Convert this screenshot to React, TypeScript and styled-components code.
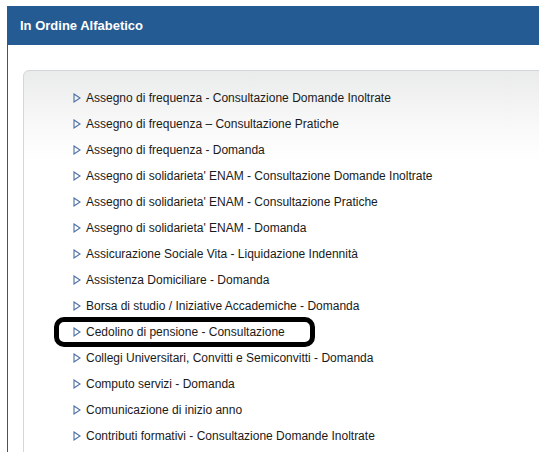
import React from "react";
import styled, { createGlobalStyle } from "styled-components";

const Global = createGlobalStyle`
  html, body { margin: 0; padding: 0; background: #ffffff; }
  body { font-family: "Liberation Sans", Arial, sans-serif; overflow: hidden; }
`;

const Page = styled.div`
  padding: 6px 0 0 7px;
  width: 539px;
  height: 452px;
  box-sizing: border-box;
  overflow: hidden;
`;

const Panel = styled.section`
  border-left: 1px solid #245b92;
  width: 560px;
  height: 460px;
`;

const Header = styled.header`
  background: #245b92;
  height: 39px;
  display: flex;
  align-items: center;
  padding-left: 12px;
  color: #ffffff;
  font-weight: bold;
  font-size: 13px;
`;

const Body = styled.div`
  padding: 25px 0 0 15px;
`;

const Box = styled.div`
  border: 1px solid #d3d7dd;
  border-radius: 6px 0 0 0;
  background: linear-gradient(to bottom, #eaebeb 0px, #fafafa 60px, #ffffff 90px);
  padding: 14px 0 20px 48px;
  height: 420px;
`;

const List = styled.ul`
  list-style: none;
  margin: 0;
  padding: 0;
  display: flex;
  flex-direction: column;
`;

const Item = styled.li`
  position: relative;
  height: 26px;
  display: flex;
  align-items: center;
  gap: 5px;
  font-size: 12px;
  color: #1a1a1a;
`;

const Marker = styled.svg`
  width: 8px;
  height: 10px;
  flex: none;
  margin-left: 1px;
`;

const Highlight = styled.span`
  position: absolute;
  left: -18px;
  top: -2px;
  width: 251px;
  height: 20px;
  border: 5px solid #000000;
  border-radius: 10px;
  pointer-events: none;
`;

const items = [
  "Assegno di frequenza - Consultazione Domande Inoltrate",
  "Assegno di frequenza – Consultazione Pratiche",
  "Assegno di frequenza - Domanda",
  "Assegno di solidarieta' ENAM - Consultazione Domande Inoltrate",
  "Assegno di solidarieta' ENAM - Consultazione Pratiche",
  "Assegno di solidarieta' ENAM - Domanda",
  "Assicurazione Sociale Vita - Liquidazione Indennità",
  "Assistenza Domiciliare - Domanda",
  "Borsa di studio / Iniziative Accademiche - Domanda",
  "Cedolino di pensione - Consultazione",
  "Collegi Universitari, Convitti e Semiconvitti - Domanda",
  "Computo servizi - Domanda",
  "Comunicazione di inizio anno",
  "Contributi formativi - Consultazione Domande Inoltrate",
];

export default function App() {
  return (
    <>
      <Global />
      <Page>
        <Panel>
          <Header>In Ordine Alfabetico</Header>
          <Body>
            <Box>
              <List>
                {items.map((t, i) => (
                  <Item key={i}>
                    {i === 9 && <Highlight />}
                    <Marker viewBox="0 0 8 10">
                      <path d="M1 1 L7 5 L1 9 Z" fill="none" stroke="#4b6fa3" strokeWidth="1.1" strokeLinejoin="miter" />
                    </Marker>
                    <span>{t}</span>
                  </Item>
                ))}
              </List>
            </Box>
          </Body>
        </Panel>
      </Page>
    </>
  );
}
